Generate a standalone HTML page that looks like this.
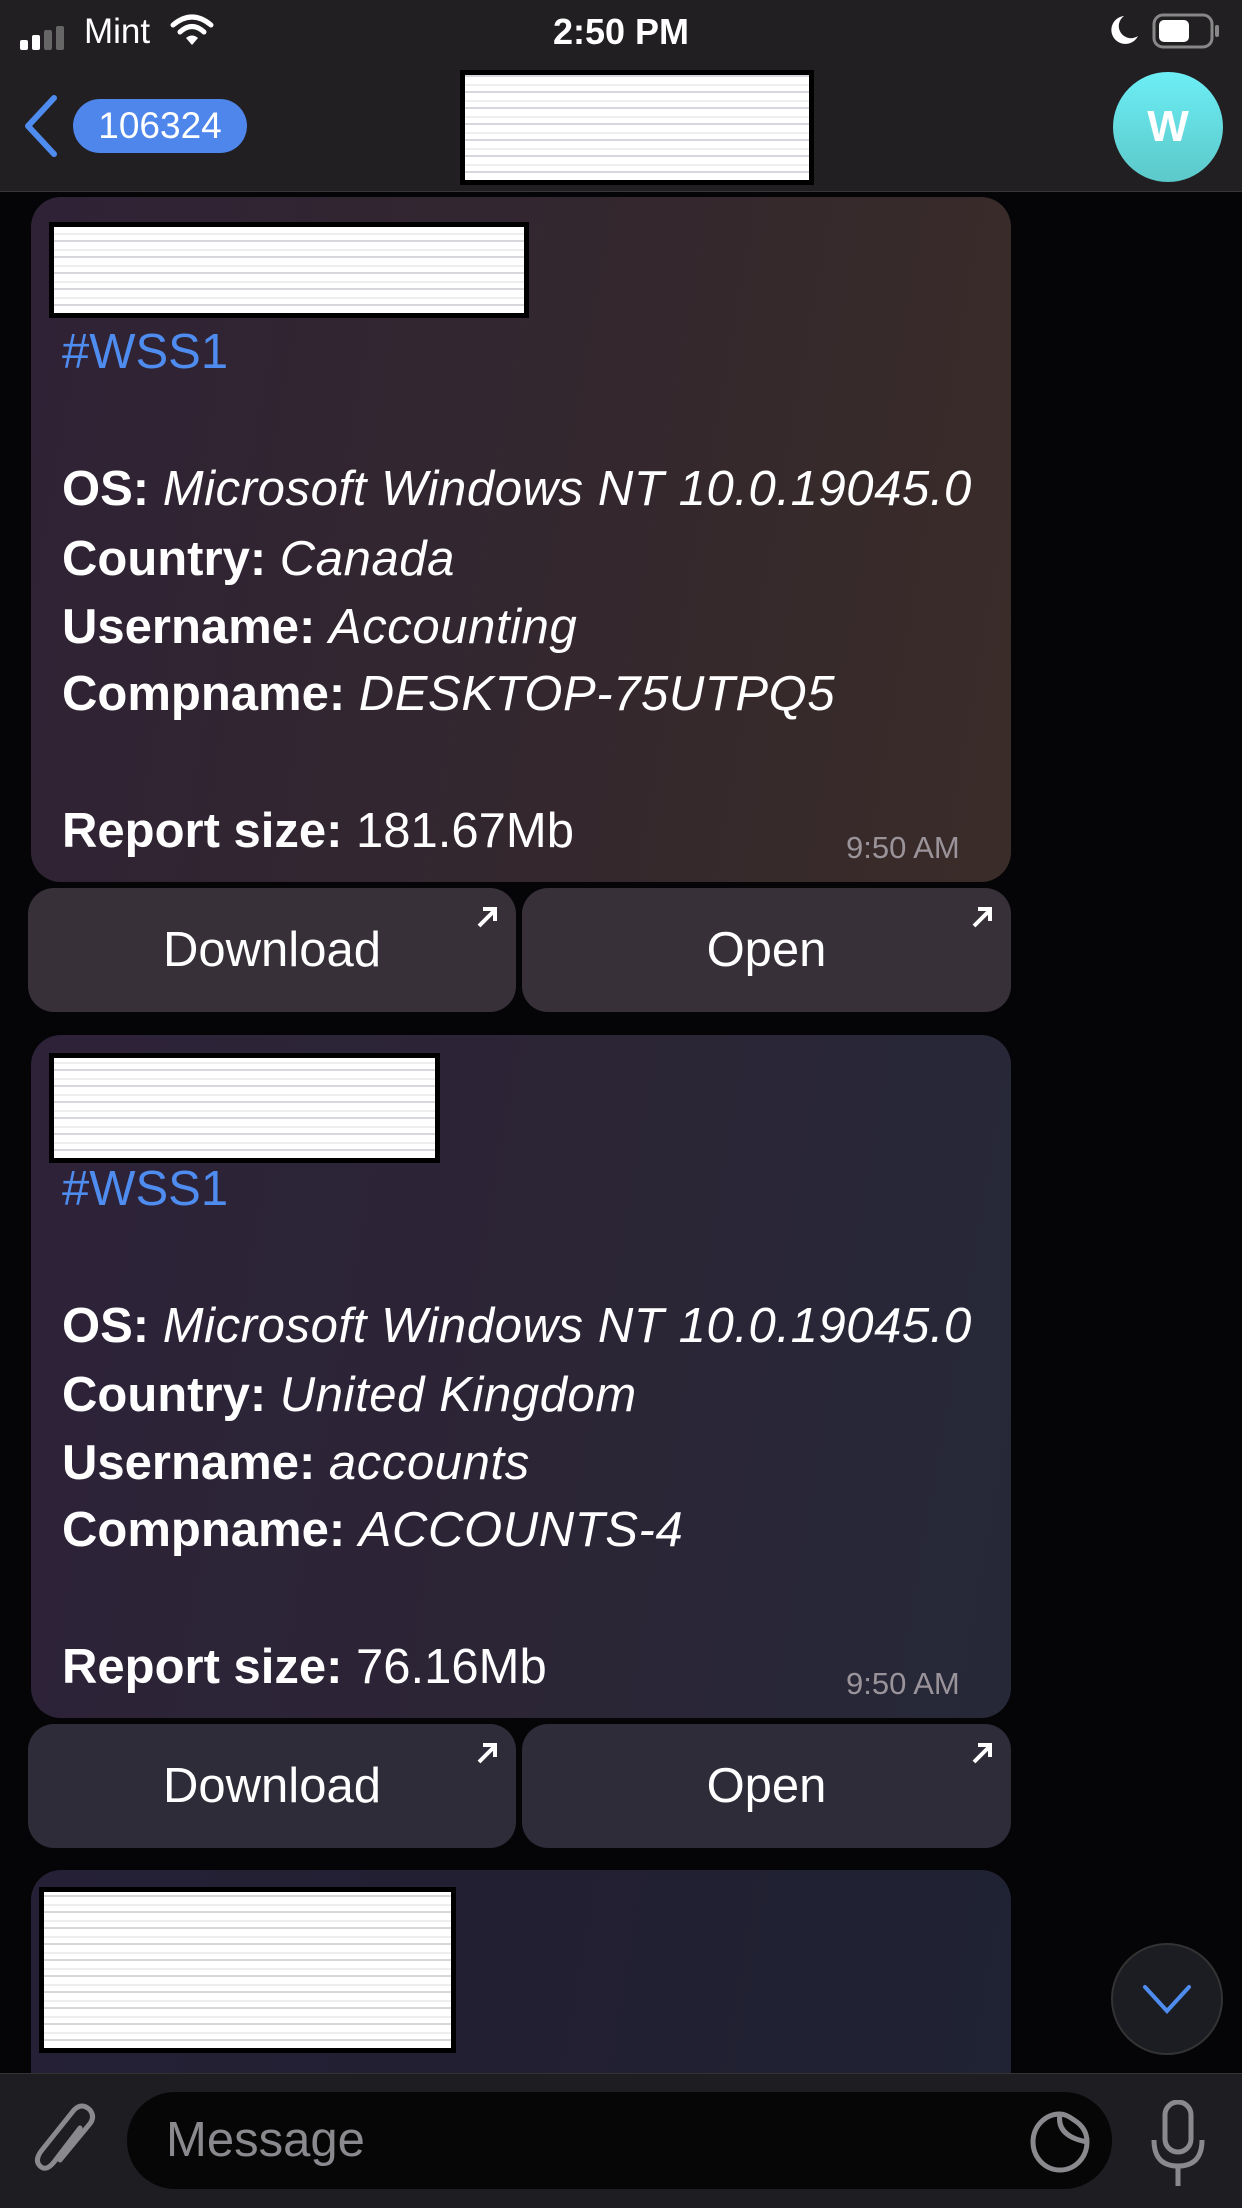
<!DOCTYPE html>
<html><head><meta charset="utf-8">
<style>
*{margin:0;padding:0;box-sizing:border-box}
body{width:1242px;height:2208px;overflow:hidden;background:#050508;font-family:"Liberation Sans",sans-serif;color:#fff;position:relative}
.abs{position:absolute}
.status{left:0;top:0;width:1242px;height:77px;background:#221f22}
.header{left:0;top:77px;width:1242px;height:115px;background:#221f22;border-bottom:1px solid #3a363a}
.redact{background:#fafafa;border:5px solid #000;background-image:repeating-linear-gradient(0deg,#fff 0 7px,#d8d8dc 7px 9px,#fff 9px 14px,#eee 14px 16px)}
.bubble{border-radius:30px}
.b1{left:31px;top:197px;width:980px;height:685px;background:linear-gradient(100deg,#2f2236 0%,#33272f 50%,#3a2c28 100%)}
.b2{left:31px;top:1035px;width:980px;height:683px;background:linear-gradient(100deg,#2d2238 0%,#2c2536 50%,#262838 100%)}
.b3{left:31px;top:1870px;width:980px;height:260px;background:linear-gradient(100deg,#252036 0%,#221f32 50%,#1f2333 100%)}
.line{left:62px;font-size:49px;line-height:68px;white-space:nowrap}
.line b{font-weight:bold}
.line i{font-style:italic;letter-spacing:0.6px}
.tag{color:#4f8cf0}
.time{font-size:31px;color:#9a949a;line-height:40px}
.btn{height:124px;border-radius:26px;font-size:49px;display:flex;align-items:center;justify-content:center}
.btn1{background:#373039}.btn2{background:#2d2c38}
.arr{position:absolute;right:16px;top:16px;width:26px;height:26px}
</style></head><body>
<div class="abs status">
  <svg class="abs" style="left:20px;top:26px" width="54" height="24"><rect x="0" y="14" width="8" height="10" rx="2" fill="#fff"/><rect x="12" y="9" width="8" height="15" rx="2" fill="#fff"/><rect x="24" y="4" width="8" height="20" rx="2" fill="#666"/><rect x="36" y="0" width="8" height="24" rx="2" fill="#666"/></svg>
  <div class="abs" style="left:84px;top:12px;font-size:35px;line-height:40px">Mint</div>
  <svg class="abs" style="left:170px;top:13px" width="44" height="34" viewBox="0 0 44 34"><path d="M3 12 Q22 -4 41 12" stroke="#fff" stroke-width="5" fill="none" stroke-linecap="round"/><path d="M10 19 Q22 8 34 19" stroke="#fff" stroke-width="5" fill="none" stroke-linecap="round"/><path d="M16 25 L22 32 L28 25 Q22 20 16 25Z" fill="#fff"/></svg>
  <div class="abs" style="left:0;width:1242px;text-align:center;top:12px;font-size:36px;line-height:40px;font-weight:bold">2:50 PM</div>
  <svg class="abs" style="left:1110px;top:14px" width="30" height="32" viewBox="0 0 30 32"><path d="M14 2 A14 14 0 1 0 28 22 A11 11 0 0 1 14 2Z" fill="#fff"/></svg>
  <svg class="abs" style="left:1152px;top:13px" width="70" height="36"><rect x="2" y="2" width="58" height="32" rx="9" stroke="#888" stroke-width="3" fill="none"/><rect x="7" y="7" width="30" height="22" rx="5" fill="#fff"/><rect x="63" y="12" width="4" height="12" rx="2" fill="#888"/></svg>
</div>
<div class="abs header">
  <svg class="abs" style="left:20px;top:17px" width="40" height="64" viewBox="0 0 40 64"><path d="M34 4 L8 32 L34 60" stroke="#4f8cf0" stroke-width="6" fill="none" stroke-linecap="round" stroke-linejoin="round"/></svg>
  <div class="abs" style="left:73px;top:22px;width:174px;height:54px;border-radius:27px;background:#4f86ec;font-size:37px;line-height:54px;text-align:center">106324</div>
  <div class="abs redact" style="left:460px;top:-7px;width:354px;height:115px"></div>
  <div class="abs" style="left:1113px;top:-5px;width:110px;height:110px;border-radius:50%;background:linear-gradient(#6ceef5,#5cc8c9);font-size:44px;font-weight:bold;line-height:110px;text-align:center">W</div>
</div>

<div class="abs bubble b1"></div>
<div class="abs redact" style="left:49px;top:222px;width:480px;height:96px"></div>
<div class="abs line tag" style="top:318px">#WSS1</div>
<div class="abs line" style="top:455px"><b>OS:</b> <i>Microsoft Windows NT 10.0.19045.0</i></div>
<div class="abs line" style="top:525px"><b>Country:</b> <i>Canada</i></div>
<div class="abs line" style="top:593px"><b>Username:</b> <i>Accounting</i></div>
<div class="abs line" style="top:660px"><b>Compname:</b> <i>DESKTOP-75UTPQ5</i></div>
<div class="abs line" style="top:797px"><b>Report size:</b> 181.67Mb</div>
<div class="abs time" style="left:846px;top:828px">9:50 AM</div>
<div class="abs btn btn1" style="left:28px;top:888px;width:488px">Download<svg class="arr" viewBox="0 0 26 26"><path d="M5 22 L21 6 M9 5 H21 V17" stroke="#fff" stroke-width="4" fill="none"/></svg></div>
<div class="abs btn btn1" style="left:522px;top:888px;width:489px">Open<svg class="arr" viewBox="0 0 26 26"><path d="M5 22 L21 6 M9 5 H21 V17" stroke="#fff" stroke-width="4" fill="none"/></svg></div>

<div class="abs bubble b2"></div>
<div class="abs redact" style="left:49px;top:1053px;width:391px;height:110px"></div>
<div class="abs line tag" style="top:1155px">#WSS1</div>
<div class="abs line" style="top:1292px"><b>OS:</b> <i>Microsoft Windows NT 10.0.19045.0</i></div>
<div class="abs line" style="top:1361px"><b>Country:</b> <i>United Kingdom</i></div>
<div class="abs line" style="top:1429px"><b>Username:</b> <i>accounts</i></div>
<div class="abs line" style="top:1496px"><b>Compname:</b> <i>ACCOUNTS-4</i></div>
<div class="abs line" style="top:1633px"><b>Report size:</b> 76.16Mb</div>
<div class="abs time" style="left:846px;top:1664px">9:50 AM</div>
<div class="abs btn btn2" style="left:28px;top:1724px;width:488px">Download<svg class="arr" viewBox="0 0 26 26"><path d="M5 22 L21 6 M9 5 H21 V17" stroke="#fff" stroke-width="4" fill="none"/></svg></div>
<div class="abs btn btn2" style="left:522px;top:1724px;width:489px">Open<svg class="arr" viewBox="0 0 26 26"><path d="M5 22 L21 6 M9 5 H21 V17" stroke="#fff" stroke-width="4" fill="none"/></svg></div>

<div class="abs bubble b3"></div>
<div class="abs redact" style="left:39px;top:1887px;width:417px;height:166px"></div>

<div class="abs" style="left:1111px;top:1943px;width:112px;height:112px;border-radius:50%;background:#1c1d22;border:2px solid #333"><svg class="abs" style="left:28px;top:38px" width="52" height="32" viewBox="0 0 52 32"><path d="M4 4 L26 28 L48 4" stroke="#4f8cf0" stroke-width="4" fill="none" stroke-linecap="round"/></svg></div>

<div class="abs" style="left:0;top:2073px;width:1242px;height:135px;background:#1e1d22;border-top:1px solid #333"></div>
<svg class="abs" style="left:30px;top:2100px" width="70" height="80" viewBox="0 0 70 80"><path d="M50 28 L24 62 Q16 72 10 66 Q4 60 12 50 L44 10 Q52 2 60 10 Q66 18 58 26 L30 60" stroke="#8a8a8e" stroke-width="5" fill="none" stroke-linecap="round"/></svg>
<div class="abs" style="left:127px;top:2092px;width:985px;height:97px;border-radius:48px;background:#060606"></div>
<div class="abs" style="left:166px;top:2113px;font-size:49px;line-height:54px;color:#8a8a8e">Message</div>
<svg class="abs" style="left:1030px;top:2110px" width="60" height="64" viewBox="0 0 60 64"><path d="M30 4 A27 28 0 1 0 57 32 Q57 18 44 10 Q36 4 30 4Z M30 4 Q26 26 57 32" stroke="#8a8a8e" stroke-width="5" fill="none"/></svg>
<svg class="abs" style="left:1148px;top:2100px" width="60" height="90" viewBox="0 0 60 90"><rect x="17" y="2" width="26" height="50" rx="13" stroke="#8a8a8e" stroke-width="5" fill="none"/><path d="M6 40 Q6 66 30 66 Q54 66 54 40 M30 66 V86" stroke="#8a8a8e" stroke-width="5" fill="none"/></svg>
</body></html>
